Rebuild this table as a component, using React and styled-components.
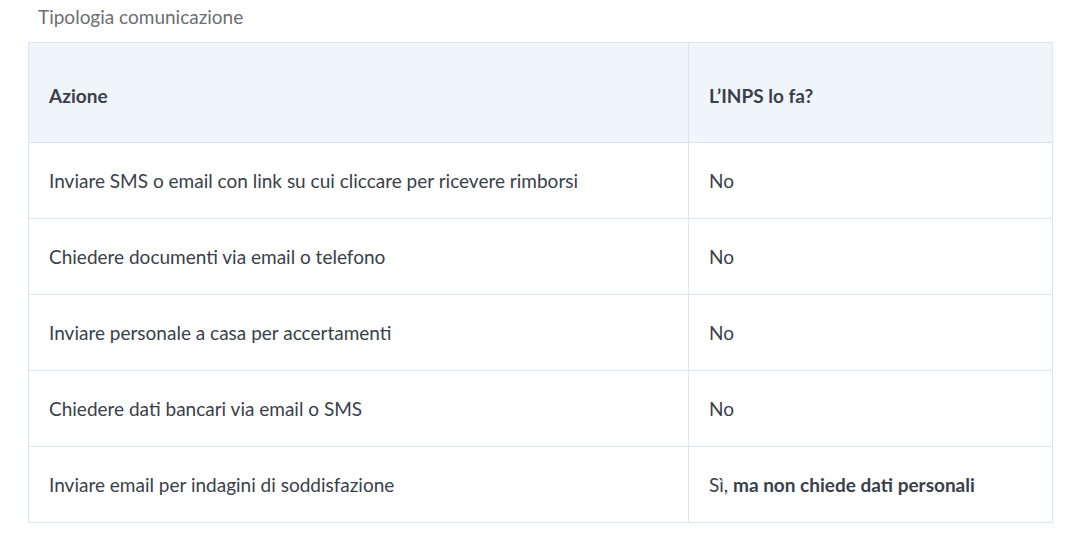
import styled, { createGlobalStyle } from 'styled-components'

const GlobalStyle = createGlobalStyle`
  body {
    margin: 0;
    background: #fff;
    font-family: Lato, "Noto Sans", sans-serif;
  }
`

const Wrap = styled.div`
  padding: 0 22px 0 28px;
`

const Caption = styled.div`
  font-size: 19px;
  color: #6b6e72;
  padding: 5px 0 0 10px;
  height: 42px;
  box-sizing: border-box;
`

const Table = styled.table`
  width: 1025px;
  border-collapse: collapse;
  color: #3a4049;
  font-size: 19px;
`

const HeadCell = styled.th`
  background: #f0f5fc;
  border: 1px solid #d7e5f7;
  text-align: left;
  font-weight: 700;
  height: 100px;
  padding: 6px 20px 0;
  box-sizing: border-box;
  width: ${(p) => p.$w || 'auto'};
`

const Cell = styled.td`
  border: 1px solid #d7e5f7;
  height: 76px;
  padding: 0 20px;
  box-sizing: border-box;
`

const rows = [
  ['Inviare SMS o email con link su cui cliccare per ricevere rimborsi', 'No'],
  ['Chiedere documenti via email o telefono', 'No'],
  ['Inviare personale a casa per accertamenti', 'No'],
  ['Chiedere dati bancari via email o SMS', 'No'],
  [
    'Inviare email per indagini di soddisfazione',
    <>
      Sì, <b>ma non chiede dati personali</b>
    </>,
  ],
]

export default function App() {
  return (
    <Wrap>
      <GlobalStyle />
      <Caption>Tipologia comunicazione</Caption>
      <Table>
        <thead>
          <tr>
            <HeadCell $w="660px">Azione</HeadCell>
            <HeadCell>L’INPS lo fa?</HeadCell>
          </tr>
        </thead>
        <tbody>
          {rows.map(([a, b], i) => (
            <tr key={i}>
              <Cell>{a}</Cell>
              <Cell>{b}</Cell>
            </tr>
          ))}
        </tbody>
      </Table>
    </Wrap>
  )
}
